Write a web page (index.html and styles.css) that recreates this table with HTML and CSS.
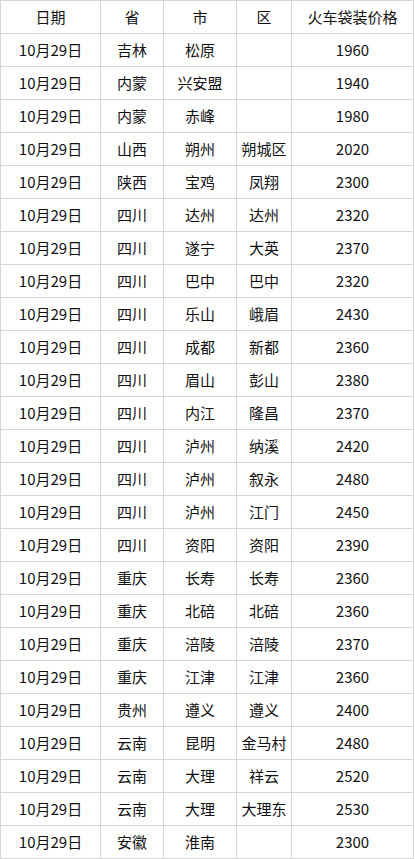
FILE: index.html
```html
<!DOCTYPE html>
<html lang="zh">
<head>
<meta charset="utf-8">
<title>火车袋装价格</title>
<link rel="stylesheet" href="styles.css">
</head>
<body>
<table class="price-table">
  <colgroup>
    <col class="c-date"><col class="c-prov"><col class="c-city"><col class="c-dist"><col class="c-price">
  </colgroup>
  <thead>
    <tr><th>日期</th><th>省</th><th>市</th><th>区</th><th>火车袋装价格</th></tr>
  </thead>
  <tbody>
    <tr><td>10月29日</td><td>吉林</td><td>松原</td><td></td><td>1960</td></tr>
    <tr><td>10月29日</td><td>内蒙</td><td>兴安盟</td><td></td><td>1940</td></tr>
    <tr><td>10月29日</td><td>内蒙</td><td>赤峰</td><td></td><td>1980</td></tr>
    <tr><td>10月29日</td><td>山西</td><td>朔州</td><td>朔城区</td><td>2020</td></tr>
    <tr><td>10月29日</td><td>陕西</td><td>宝鸡</td><td>凤翔</td><td>2300</td></tr>
    <tr><td>10月29日</td><td>四川</td><td>达州</td><td>达州</td><td>2320</td></tr>
    <tr><td>10月29日</td><td>四川</td><td>遂宁</td><td>大英</td><td>2370</td></tr>
    <tr><td>10月29日</td><td>四川</td><td>巴中</td><td>巴中</td><td>2320</td></tr>
    <tr><td>10月29日</td><td>四川</td><td>乐山</td><td>峨眉</td><td>2430</td></tr>
    <tr><td>10月29日</td><td>四川</td><td>成都</td><td>新都</td><td>2360</td></tr>
    <tr><td>10月29日</td><td>四川</td><td>眉山</td><td>彭山</td><td>2380</td></tr>
    <tr><td>10月29日</td><td>四川</td><td>内江</td><td>隆昌</td><td>2370</td></tr>
    <tr><td>10月29日</td><td>四川</td><td>泸州</td><td>纳溪</td><td>2420</td></tr>
    <tr><td>10月29日</td><td>四川</td><td>泸州</td><td>叙永</td><td>2480</td></tr>
    <tr><td>10月29日</td><td>四川</td><td>泸州</td><td>江门</td><td>2450</td></tr>
    <tr><td>10月29日</td><td>四川</td><td>资阳</td><td>资阳</td><td>2390</td></tr>
    <tr><td>10月29日</td><td>重庆</td><td>长寿</td><td>长寿</td><td>2360</td></tr>
    <tr><td>10月29日</td><td>重庆</td><td>北碚</td><td>北碚</td><td>2360</td></tr>
    <tr><td>10月29日</td><td>重庆</td><td>涪陵</td><td>涪陵</td><td>2370</td></tr>
    <tr><td>10月29日</td><td>重庆</td><td>江津</td><td>江津</td><td>2360</td></tr>
    <tr><td>10月29日</td><td>贵州</td><td>遵义</td><td>遵义</td><td>2400</td></tr>
    <tr><td>10月29日</td><td>云南</td><td>昆明</td><td>金马村</td><td>2480</td></tr>
    <tr><td>10月29日</td><td>云南</td><td>大理</td><td>祥云</td><td>2520</td></tr>
    <tr><td>10月29日</td><td>云南</td><td>大理</td><td>大理东</td><td>2530</td></tr>
    <tr><td>10月29日</td><td>安徽</td><td>淮南</td><td></td><td>2300</td></tr>
  </tbody>
</table>
</body>
</html>
```
FILE: styles.css
```css
html, body {
  margin: 0;
  padding: 0;
  background: #ffffff;
}

.price-table {
  border-collapse: separate;
  border-spacing: 0;
  table-layout: fixed;
  width: 414px;
  border-top: 1px solid #d6d6d6;
  border-left: 1px solid #d6d6d6;
  font-family: "Noto Sans CJK SC", "Liberation Sans", sans-serif;
  font-size: 15px;
  color: #111111;
}

.c-date { width: 100px; }
.c-prov { width: 63px; }
.c-city { width: 73px; }
.c-dist { width: 55px; }
.c-price { width: 122px; }

.price-table th,
.price-table td {
  box-sizing: border-box;
  height: 33px;
  padding: 0;
  border-right: 1px solid #d6d6d6;
  border-bottom: 1px solid #d6d6d6;
  text-align: center;
  vertical-align: middle;
  font-weight: normal;
  line-height: 20px;
  white-space: nowrap;
}
```
